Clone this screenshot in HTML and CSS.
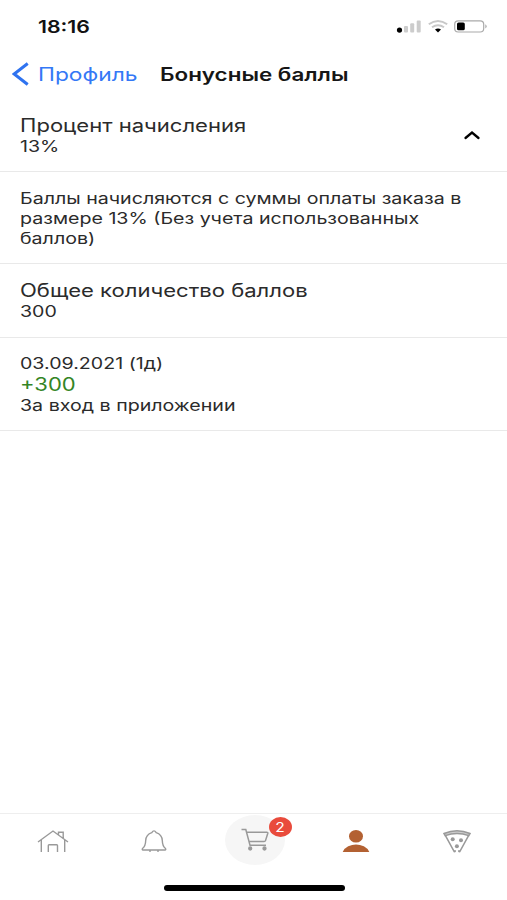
FILE: index.html
```html
<!DOCTYPE html>
<html lang="ru">
<head>
<meta charset="utf-8">
<title>Бонусные баллы</title>
<link rel="stylesheet" href="styles.css">
</head>
<body>
<div class="screen">
  <header class="status">
    <span class="t time">18:16</span>
    <svg class="indicators" width="96" height="20" viewBox="0 0 96 20">
      <ellipse cx="7.5" cy="14.1" rx="2.6" ry="2.6" fill="#000"/>
      <g fill="#ccc"><rect x="12" y="10" width="4" height="6.5" rx="1"/><rect x="18.2" y="7.2" width="4" height="9.3" rx="1"/><rect x="24.7" y="4.5" width="4" height="12" rx="1"/></g>
      <g fill="none" stroke="#c8c8c8" stroke-width="2"><path d="M36.8 8.3Q46 1.6 55.2 8.3"/><path d="M40 11.3Q46 7 52 11.3"/></g>
      <path d="M43 13.4Q46 11.6 49 13.4L46 16.4z" fill="#000"/>
      <rect x="62.7" y="4.8" width="29" height="11.2" rx="3.5" fill="#fff" stroke="#aaa" stroke-width="1.2"/>
      <rect x="65" y="6.5" width="7.8" height="7.8" rx="1.6" fill="#000"/>
      <path d="M93.3 8.2q2.8 2.2 0 4.4z" fill="#aaa"/>
    </svg>
  </header>
  <nav class="navbar">
    <svg class="back" width="18" height="26" viewBox="0 0 18 26"><path d="M15.7 2.5L2.2 13l13.5 10.5" fill="none" stroke="#2f73f0" stroke-width="3"/></svg>
    <span class="t parent">Профиль</span>
    <h1 class="t title">Бонусные баллы</h1>
  </nav>
  <main>
    <section class="row rate">
      <div>
        <p class="t big">Процент начисления</p>
        <p class="t small">13%</p>
      </div>
      <svg class="chevron" width="20" height="12" viewBox="0 0 20 12"><path d="M3.5 9L10 3.6 16.5 9" fill="none" stroke="#000" stroke-width="2.3" stroke-linecap="round"/></svg>
    </section>
    <section class="row info">
      <p class="t small">Баллы начисляются с суммы оплаты заказа в<br>размере 13% (Без учета использованных<br>баллов)</p>
    </section>
    <section class="row total">
      <p class="t big">Общее количество баллов</p>
      <p class="t small">300</p>
    </section>
    <section class="row entry">
      <p class="t small">03.09.2021 (1д)</p>
      <p class="t big plus">+300</p>
      <p class="t small">За вход в приложении</p>
    </section>
  </main>
  <footer class="tabs">
    <div class="tab"><svg width="34" height="28" viewBox="0 0 34 28" fill="none" stroke="#999" stroke-width="1.4"><path d="M2 15L17 4l15 11M5.3 13v12M28.7 13v12M12.3 25v-6.5q0-.8.8-.8h7.6q.8 0 .8.8V25M22.5 7.5V5.3h4.7v5.8"/></svg></div>
    <div class="tab"><svg width="34" height="28" viewBox="0 0 34 28" fill="none" stroke="#999" stroke-width="1.4"><path d="M14.8 5.6Q17 2.2 19.2 5.6Q25 7.5 25.3 13.5Q25.4 19 28.5 21.5Q29.2 23 28 23H6Q4.8 23 5.5 21.5Q8.6 19 8.7 13.5Q9 7.5 14.8 5.6zM13 23v2M21 23v2"/></svg></div>
    <div class="tab"><div class="cart">
      <svg width="34" height="28" viewBox="0 0 34 28" fill="none" stroke="#999" stroke-width="1.5"><path d="M3.5 3.5h4.3L12 19.3h16M8.7 6.2h20.1q1.2 0 1 1l-2.3 7.4q-.3.9-1.4.9H11"/><circle cx="12.2" cy="22.5" r="1.4" fill="#999"/><circle cx="26.5" cy="22.5" r="1.4" fill="#999"/></svg>
      <span class="badge"><span>2</span></span>
    </div></div>
    <div class="tab"><svg width="34" height="28" viewBox="0 0 34 28" fill="#b36132"><ellipse cx="17" cy="9.3" rx="7" ry="6.3"/><path d="M3.7 25Q5 21.3 9.2 19.2Q17 15.7 24.8 19.2Q29 21.3 30.3 25z"/></svg></div>
    <div class="tab"><svg width="34" height="28" viewBox="0 0 34 28" fill="none" stroke="#999" stroke-width="1.5"><path fill="#ccc" d="M4 6.5Q17 .8 30 6.5L28.8 8.6Q17 4.2 5.2 8.6z"/><path d="M5.3 8.3L14.2 24.5l1.1.2M28.7 8.3L19.8 24.5l-1.1.2M15 24.7l.4-1.5M19 24.7l-.4-1.5"/><g fill="#999" stroke="none"><circle cx="12.7" cy="12.3" r="2"/><circle cx="21" cy="13.2" r="2"/><circle cx="16.9" cy="19.2" r="2"/></g></svg></div>
  </footer>
  <div class="home"></div>
</div>
</body>
</html>
```
FILE: styles.css
```css
* { box-sizing: border-box; }
body, p, h1 { margin: 0; }
body { background: #fff; color: #2b2b2b; font-family: Inter, "Liberation Sans", sans-serif; }
.screen { display: flex; flex-direction: column; width: 507px; height: 900px; overflow: hidden; }
.t { display: block; width: max-content; white-space: nowrap; transform: scaleX(1.25); transform-origin: left center; }
.status { display: flex; justify-content: space-between; height: 50px; padding: 16px 19px 0 38px; }
.indicators { flex: none; }
.time { color: #111; font-size: 17px; font-weight: 600; line-height: 22px; }
.navbar { display: grid; grid-template-columns: 26px 122px auto; align-items: center; height: 48px; padding-left: 12px; }
.parent { color: #3478f6; font-size: 18px; transform: scaleX(1.265); }
.title { color: #161616; font-size: 18px; font-weight: 600; transform: scaleX(1.245); }
.row { border-bottom: 1px solid #e9e9e9; padding-left: 20px; }
.big { font-size: 18px; line-height: 22px; transform: scaleX(1.225); }
.small { font-size: 15.5px; line-height: 20px; transform: scaleX(1.265); }
.rate { display: flex; justify-content: space-between; height: 74px; padding-top: 17px; padding-right: 25px; }
.chevron { margin-top: 14px; }
.info { height: 92px; padding-top: 17px; }
.total { height: 74px; padding-top: 16px; }
.entry { height: 93px; padding-top: 16px; }
.plus { color: #348525; }
.tabs { display: grid; grid-template-columns: repeat(5, 1fr); height: 66px; margin-top: auto; padding-left: 2px; border-top: 1px solid #eee; }
.tab { display: flex; justify-content: center; padding-top: 13px; }
.cart { position: relative; display: flex; justify-content: center; width: 60px; height: 50px; margin-top: -12px; padding-top: 11px; border-radius: 50%; background: #f6f6f6; }
.badge { position: absolute; top: 2px; left: 44px; display: flex; align-items: center; justify-content: center; width: 23px; height: 20px; border-radius: 50%; background: #e94b3c; color: #fff; font-size: 13px; }
.badge span { transform: scaleX(1.2); }
.home { flex: none; width: 181px; height: 6px; margin: 6px 0 9px 164px; border-radius: 3px; background: #000; }
```
